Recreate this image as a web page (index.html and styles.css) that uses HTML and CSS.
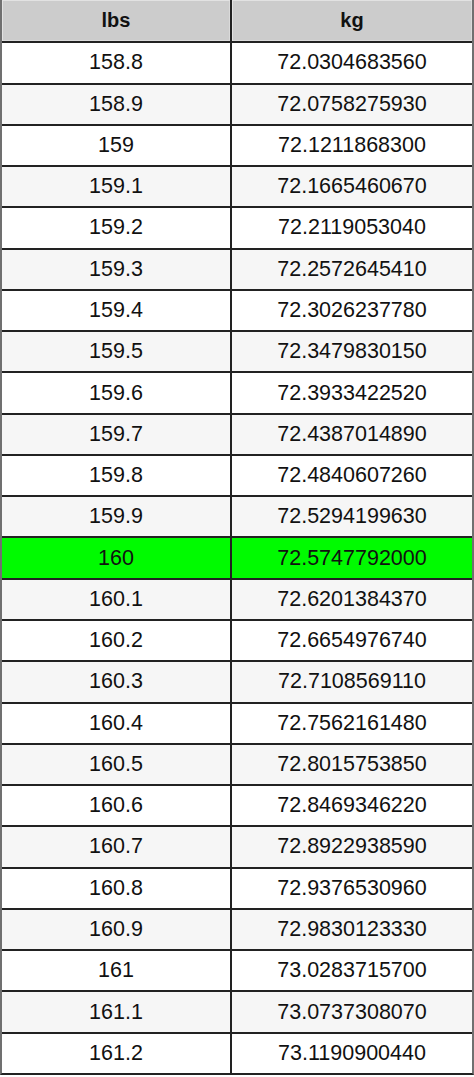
FILE: index.html
```html
<!DOCTYPE html>
<html>
<head>
<meta charset="utf-8">
<link rel="stylesheet" href="styles.css">
</head>
<body>
<div class="table">
  <div class="row head"><div class="cell">lbs</div><div class="cell">kg</div></div>
  <div class="row"><div class="cell">158.8</div><div class="cell">72.0304683560</div></div>
  <div class="row alt"><div class="cell">158.9</div><div class="cell">72.0758275930</div></div>
  <div class="row"><div class="cell">159</div><div class="cell">72.1211868300</div></div>
  <div class="row alt"><div class="cell">159.1</div><div class="cell">72.1665460670</div></div>
  <div class="row"><div class="cell">159.2</div><div class="cell">72.2119053040</div></div>
  <div class="row alt"><div class="cell">159.3</div><div class="cell">72.2572645410</div></div>
  <div class="row"><div class="cell">159.4</div><div class="cell">72.3026237780</div></div>
  <div class="row alt"><div class="cell">159.5</div><div class="cell">72.3479830150</div></div>
  <div class="row"><div class="cell">159.6</div><div class="cell">72.3933422520</div></div>
  <div class="row alt"><div class="cell">159.7</div><div class="cell">72.4387014890</div></div>
  <div class="row"><div class="cell">159.8</div><div class="cell">72.4840607260</div></div>
  <div class="row alt"><div class="cell">159.9</div><div class="cell">72.5294199630</div></div>
  <div class="row hl"><div class="cell">160</div><div class="cell">72.5747792000</div></div>
  <div class="row alt"><div class="cell">160.1</div><div class="cell">72.6201384370</div></div>
  <div class="row"><div class="cell">160.2</div><div class="cell">72.6654976740</div></div>
  <div class="row alt"><div class="cell">160.3</div><div class="cell">72.7108569110</div></div>
  <div class="row"><div class="cell">160.4</div><div class="cell">72.7562161480</div></div>
  <div class="row alt"><div class="cell">160.5</div><div class="cell">72.8015753850</div></div>
  <div class="row"><div class="cell">160.6</div><div class="cell">72.8469346220</div></div>
  <div class="row alt"><div class="cell">160.7</div><div class="cell">72.8922938590</div></div>
  <div class="row"><div class="cell">160.8</div><div class="cell">72.9376530960</div></div>
  <div class="row alt"><div class="cell">160.9</div><div class="cell">72.9830123330</div></div>
  <div class="row"><div class="cell">161</div><div class="cell">73.0283715700</div></div>
  <div class="row alt"><div class="cell">161.1</div><div class="cell">73.0737308070</div></div>
  <div class="row"><div class="cell">161.2</div><div class="cell">73.1190900440</div></div>
</div>
</body>
</html>
```
FILE: styles.css
```css
html, body {
  margin: 0;
  padding: 0;
  background: #ffffff;
}
.table {
  width: 474px;
  box-sizing: border-box;
  border-left: 2px solid #707070;
  border-right: 2px solid #707070;
  border-bottom: 2px solid #222222;
  font-family: "Liberation Sans", Arial, sans-serif;
  color: #111111;
}
.row {
  display: grid;
  grid-template-columns: 230px 1fr;
  height: 41.27px;
  box-sizing: border-box;
  border-top: 2px solid #222222;
  background: #ffffff;
  font-size: 21.5px;
}
.row.alt {
  background: #f6f6f6;
}
.row.hl {
  background: #00fb00;
}
.row.head {
  border-top: none;
  background: #cccccc;
  font-size: 20px;
  font-weight: bold;
  color: #111111;
}
.row.head .cell {
  box-shadow: inset 1px 1px 0 #e2e2e2, inset -1px -1px 0 #dadada;
}
.cell {
  display: flex;
  align-items: center;
  justify-content: center;
  box-sizing: border-box;
}
.cell:first-child {
  border-right: 2px solid #222222;
}
```
